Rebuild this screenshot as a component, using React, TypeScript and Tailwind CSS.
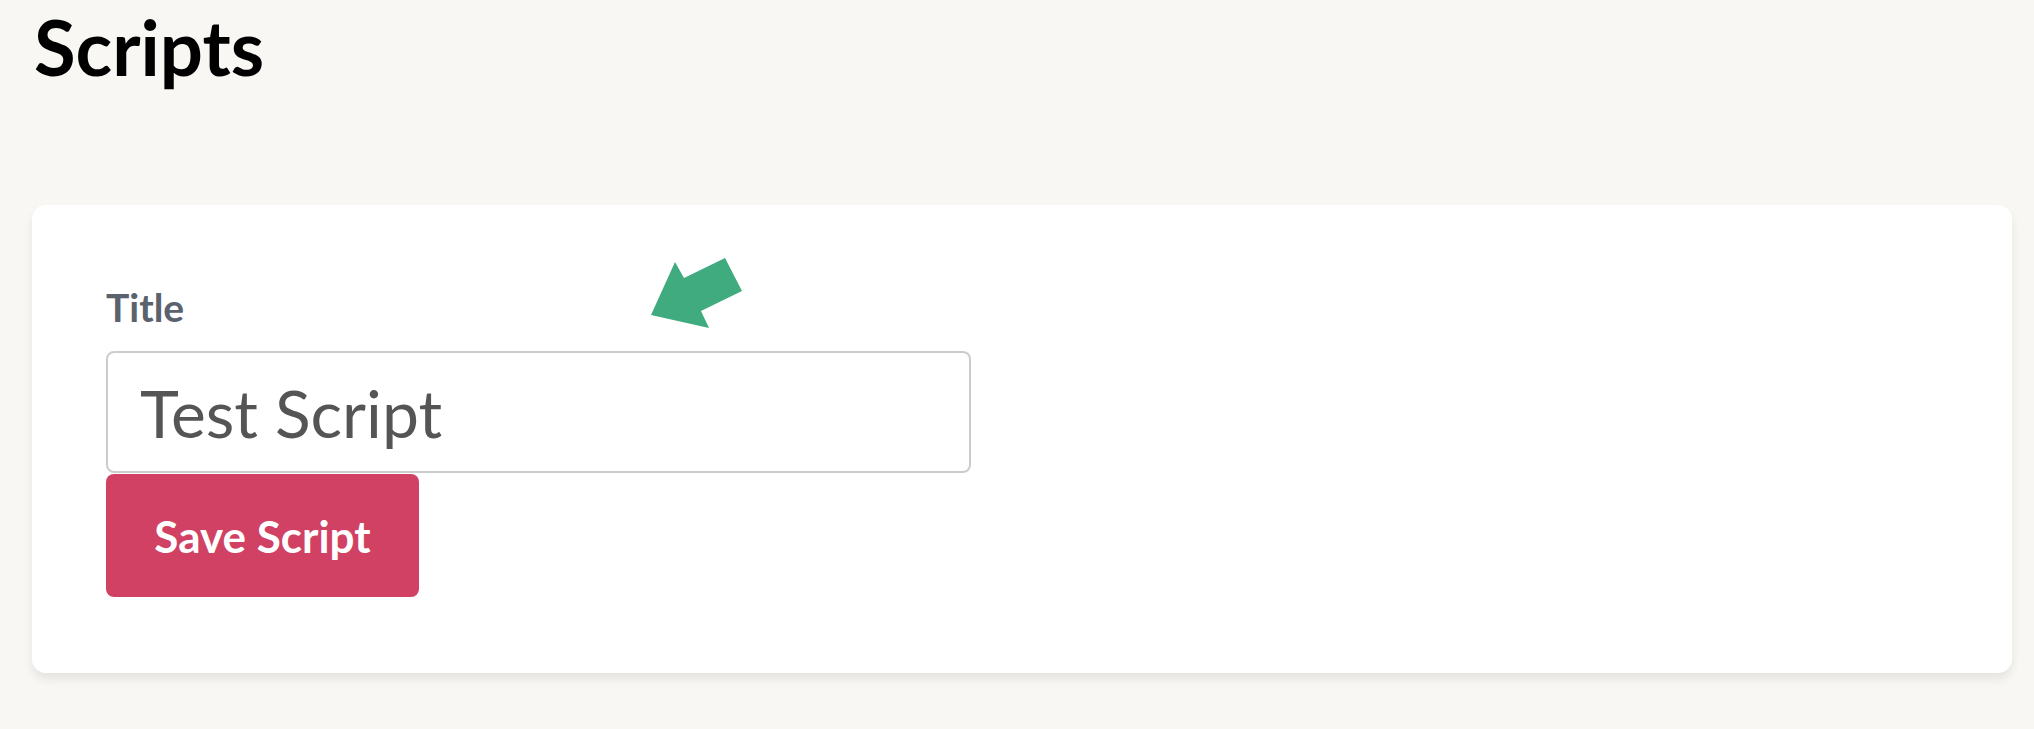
export default function App() {
    return (
        <div className="min-h-[729px] bg-[#f8f7f4] pl-8 pr-[22px] pt-[8px] pb-10" style={{ fontFamily: 'Lato, "Open Sans", sans-serif' }}>
            <h1 className="text-[76px] font-bold leading-none text-black pt-[1px] pl-[2px]">Scripts</h1>

            <div className="relative mt-[120px] bg-white rounded-[14px] shadow-[0_6px_10px_rgba(0,0,0,0.08)] pl-[74px] pt-[83px] pb-[76px]">
                <svg className="absolute left-[619px] top-[53px]" width="92" height="71" viewBox="0 0 92 71">
                    <polygon points="0,57 24,4 33,20 74,0 91,33 50,53 58,70" fill="#41ab80" />
                </svg>

                <label className="block text-[39px] font-bold leading-none text-[#5a626d] mb-[24px]">Title</label>
                <input
                    type="text"
                    defaultValue="Test Script"
                    className="block w-[865px] h-[122px] border-2 border-[#cccccc] rounded-[8px] px-[32px] text-[66px] text-[#555555] bg-white outline-none"
                />
                <button className="mt-px w-[313px] h-[123px] rounded-[8px] bg-[#d04164] text-white text-[44px] font-bold">
                    Save Script
                </button>
            </div>
        </div>
    );
}
